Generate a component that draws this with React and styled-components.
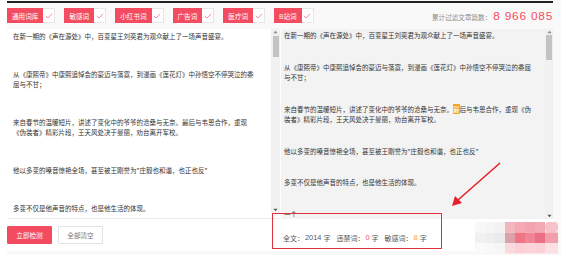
import React from "react";
import styled, { createGlobalStyle } from "styled-components";

const Global = createGlobalStyle`
  html, body { margin: 0; padding: 0; background: #f7f7f7; }
  body { font-family: "Noto Sans CJK SC", "Noto Sans", sans-serif; }
`;

const Page = styled.div`
  position: relative;
  width: 561px;
  height: 255px;
  box-sizing: border-box;
  padding: 1px 8px 0 7px;
  display: flex;
  flex-direction: column;
  background: linear-gradient(to right, #fff 0 7px, #f9f9f9 7px);
  overflow: hidden;
`;

const TopRule = styled.div`
  height: 2px;
  background: #222;
`;

const Toolbar = styled.div`
  height: 26px;
  display: flex;
  align-items: center;
  justify-content: space-between;
`;

const Tags = styled.div`
  display: flex;
  align-items: center;
  gap: 9px;
  margin-top: -1px;
`;

const Tag = styled.div`
  display: flex;
  align-items: stretch;
  height: 15px;
`;

const TagLabel = styled.span`
  display: flex;
  align-items: center;
  padding: 0 5px;
  background: #f34b60;
  color: #fff;
  font-size: 6.6px;
  white-space: nowrap;
`;

const TagCheck = styled.span`
  width: 12px;
  box-sizing: border-box;
  border: 1px solid #e6e6e6;
  border-left: none;
  background: #fff;
  display: flex;
  align-items: center;
  justify-content: center;
`;

const Counter = styled.div`
  display: flex;
  align-items: baseline;
  gap: 2px;
  color: #8a8a8a;
  font-size: 6.6px;
`;

const CounterNum = styled.span`
  color: #f34b60;
  font-family: "Liberation Sans", Arial, sans-serif;
  font-size: 11.8px;
  letter-spacing: 0.8px;
`;

const Panel = styled.div`
  position: relative;
  height: 222px;
  background: #fff;
  display: flex;
  flex-direction: column;
`;

const Editors = styled.div`
  display: flex;
  height: 190px;
  gap: 1px;
`;

const Editor = styled.div`
  display: flex;
  width: ${(p) => p.$width || "auto"};
  flex: ${(p) => (p.$width ? "none" : 1)};
  background: ${(p) => (p.$gray ? "#f3f3f3" : "#fff")};
  height: ${(p) => p.$height || "100%"};
  border-bottom: ${(p) => (p.$gray ? "none" : "1px solid #ececec")};
  box-sizing: border-box;
  overflow: hidden;
`;

const TextBody = styled.div`
  flex: 1;
  padding: ${(p) => p.$pad};
  color: #333;
  font-size: 6.5px;
  line-height: ${(p) => p.$lh}px;
  overflow: hidden;
`;

const Para = styled.p`
  margin: 0 0 ${(p) => p.$gap}px 0;
`;

const Mark = styled.span`
  background: #f6a623;
  color: #fff;
`;

const ScrollTrack = styled.div`
  width: ${(p) => p.$w}px;
  height: ${(p) => p.$h}px;
  background: #f1f1f1;
  display: flex;
  flex-direction: column;
  align-items: center;
`;

const ScrollArrow = styled.div`
  height: 6px;
  display: flex;
  align-items: center;
  justify-content: center;
`;

const ScrollThumb = styled.div`
  width: 6px;
  height: ${(p) => p.$h}px;
  background: #c3c3c3;
  margin-top: ${(p) => p.$top}px;
`;

const ScrollFill = styled.div`
  flex: 1;
`;

const Footer = styled.div`
  flex: 1;
  display: flex;
`;

const FooterLeft = styled.div`
  width: 273px;
  display: flex;
  align-items: flex-start;
  gap: 6px;
  padding-top: 7px;
`;

const Button = styled.button`
  width: 45px;
  height: 18px;
  padding: 0;
  font-family: inherit;
  font-size: 6.6px;
  border: 1px solid ${(p) => (p.$primary ? "#f34b60" : "#e2e2e2")};
  background: ${(p) => (p.$primary ? "#f34b60" : "#fff")};
  color: ${(p) => (p.$primary ? "#fff" : "#777")};
  border-radius: 1px;
`;

const Stats = styled.div`
  display: flex;
  align-items: center;
  gap: 6px;
  padding-left: 3px;
  padding-top: 5px;
  font-size: 7px;
  color: #555;
`;

const Stat = styled.span`
  display: flex;
  align-items: center;
  white-space: nowrap;
`;

const StatValue = styled.span`
  font-family: "Liberation Sans", Arial, sans-serif;
  font-size: 7.4px;
  margin: 0 2px 0 1px;
  color: ${(p) => p.$c || "#555"};
`;

const RedBox = styled.div`
  position: absolute;
  left: 265px;
  top: 184px;
  width: 170px;
  height: 36px;
  box-sizing: border-box;
  border: 1.5px solid #e2313e;
`;

const Overlay = styled.svg`
  position: absolute;
  left: 0;
  top: 0;
  pointer-events: none;
`;

const Up = () => (
  <svg width="5" height="4" viewBox="0 0 5 4">
    <path d="M0.5 3.2 L2.5 0.8 L4.5 3.2 Z" fill="#8a8a8a" />
  </svg>
);
const Down = () => (
  <svg width="5" height="4" viewBox="0 0 5 4">
    <path d="M0.5 0.8 L2.5 3.2 L4.5 0.8 Z" fill="#555" />
  </svg>
);

const Check = () => (
  <svg width="8" height="6" viewBox="0 0 8 6">
    <path d="M0.8 3 L3 5 L7.2 0.8" fill="none" stroke="#f27f8f" strokeWidth="0.9" />
  </svg>
);

const Scrollbar = ({ w, h, top, thumb }) => (
  <ScrollTrack $w={w} $h={h}>
    <ScrollArrow><Up /></ScrollArrow>
    <ScrollThumb $top={top} $h={thumb} />
    <ScrollFill />
    <ScrollArrow><Down /></ScrollArrow>
  </ScrollTrack>
);

const tags = ["通用词库", "敏感词", "小红书词", "广告词", "医疗词", "B站词"];

const mosaic = [
  ["#f8f8f8", "#f5f5f5", "#f2f2f2", "#f3b6be", "#f5a9b4", "#f2a3ae", "#f5a9b3", "#f8c0c8"],
  ["#f1f1f1", "#eeeeee", "#eaeaea", "#dfa1a9", "#ee7585", "#f08596", "#ec7085", "#f39eab"],
  ["#fafafa", "#f8f8f8", "#f6f6f6", "#fad9de", "#fbd0d6", "#fbd4da", "#fbd0d6", "#fce0e4"],
];

export default function App() {
  return (
    <>
      <Global />
      <Page>
        <TopRule />
        <Toolbar>
          <Tags>
            {tags.map((t) => (
              <Tag key={t}>
                <TagLabel>{t}</TagLabel>
                <TagCheck><Check /></TagCheck>
              </Tag>
            ))}
          </Tags>
          <Counter>
            <span>累计过滤文章篇数：</span>
            <CounterNum>8 966 085</CounterNum>
          </Counter>
        </Toolbar>
        <Panel>
          <Editors>
            <Editor $width="273px" $height="190px">
              <TextBody $pad="2px 13px 0 6px" $lh={10.5}>
                <Para $gap={27}>在新一期的《声在源处》中，百变星王刘奕君为观众献上了一场声音盛宴。</Para>
                <Para $gap={27}>从《康熙帝》中康熙追悼会的豪迈与落寞，到漫画《莲花灯》中孙悟空不停哭泣的委屈与不甘；</Para>
                <Para $gap={27}>来自春节的温暖短片，讲述了变化中的爷爷的沧桑与无奈。最后与韦恩合作，重现《伪装者》精彩片段，王天风处决于曼丽，劝台离开军校。</Para>
                <Para $gap={28}>他以多变的嗓音惊艳全场，甚至被王刚誉为"庄毅也和谐，也正也反"</Para>
                <Para $gap={27}>多变不仅是他声音的特点，也是他生活的体现。</Para>
              </TextBody>
              <Scrollbar w={9} h={184} top={1} thumb={21} />
            </Editor>
            <Editor $gray>
              <TextBody $pad="1px 12px 0 3px" $lh={10.5}>
                <Para $gap={21}>在新一期的《声在源处》中，百变星王刘奕君为观众献上了一场声音盛宴。</Para>
                <Para $gap={21}>从《康熙帝》中康熙追悼会的豪迈与落寞，到漫画《莲花灯》中孙悟空不停哭泣的委屈与不甘；</Para>
                <Para $gap={21}>来自春节的温暖短片，讲述了变化中的爷爷的沧桑与无奈。<Mark>最</Mark>后与韦恩合作，重现《伪装者》精彩片段，王天风处决于曼丽，劝台离开军校。</Para>
                <Para $gap={21}>他以多变的嗓音惊艳全场，甚至被王刚誉为"庄毅也和谐，也正也反"</Para>
                <Para $gap={21}>多变不仅是他声音的特点，也是他生活的体现。</Para>
                <Para $gap={21}>一个</Para>
              </TextBody>
              <Scrollbar w={8} h={190} top={0} thumb={25} />
            </Editor>
          </Editors>
          <Footer>
            <FooterLeft>
              <Button $primary>立即检测</Button>
              <Button>全部清空</Button>
            </FooterLeft>
            <Stats>
              <Stat>全文：<StatValue>2014</StatValue>字</Stat>
              <Stat>违禁词：<StatValue $c="#f34b60">0</StatValue>字</Stat>
              <Stat>敏感词：<StatValue $c="#f5a623">8</StatValue>字</Stat>
            </Stats>
          </Footer>
          <RedBox />
        </Panel>
        <Overlay width="561" height="255" viewBox="0 0 561 255">
          <line x1="500" y1="163" x2="458" y2="200" stroke="#e8202a" strokeWidth="1.6" />
          <path d="M452 206 L455 196 L462 203 Z" fill="#e8202a" />
          {mosaic.map((row, ri) =>
            row.map((c, ci) => (
              <rect
                key={ri + "-" + ci}
                x={475 + ci * 10}
                y={222 + ri * 10.5}
                width={ci === 7 ? 13 : 10}
                height={10.5}
                fill={c}
                rx={ci === 7 && ri === 0 ? 4 : 0}
              />
            ))
          )}
        </Overlay>
      </Page>
    </>
  );
}
